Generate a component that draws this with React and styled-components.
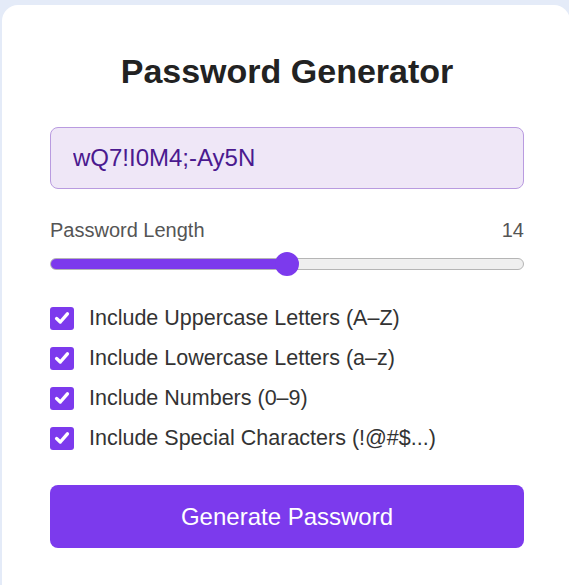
import React, { useState } from "react";
import styled, { createGlobalStyle } from "styled-components";

const GlobalStyle = createGlobalStyle`
  * { box-sizing: border-box; }
  body {
    margin: 0;
    background: #e4ebf8;
    font-family: "Liberation Sans", Arial, sans-serif;
    overflow: hidden;
  }
`;

const Page = styled.div`
  height: 585px;
  padding: 5px 0 0 2px;
`;

const Card = styled.div`
  width: 568px;
  min-height: 600px;
  background: #ffffff;
  border-radius: 16px;
  padding: 46px 46px 0 48px;
  display: flex;
  flex-direction: column;
`;

const Title = styled.h1`
  margin: 0 0 36px;
  font-size: 34px;
  line-height: 40px;
  font-weight: 700;
  color: #222222;
  text-align: center;
`;

const Output = styled.input`
  width: 100%;
  height: 62px;
  padding: 0 22px;
  border: 1px solid #b99be0;
  border-radius: 8px;
  background: #efe7f7;
  color: #4b1a8f;
  font-family: inherit;
  font-size: 24px;
  outline: none;
`;

const LengthRow = styled.div`
  margin-top: 29px;
  display: flex;
  justify-content: space-between;
  font-size: 20px;
  line-height: 24px;
  color: #555555;
`;

const Range = styled.input`
  -webkit-appearance: none;
  appearance: none;
  display: block;
  width: 100%;
  height: 24px;
  margin: 10px 0 0;
  background: transparent;

  &::-webkit-slider-runnable-track {
    height: 12px;
    border-radius: 6px;
    border: 1px solid #b5b5b5;
    background: linear-gradient(
      to right,
      #7c3aed 0,
      #7c3aed ${(p) => p.$fill}%,
      #efefef ${(p) => p.$fill}%,
      #efefef 100%
    );
  }

  &::-webkit-slider-thumb {
    -webkit-appearance: none;
    width: 24px;
    height: 24px;
    margin-top: -7px;
    border-radius: 50%;
    background: #7c3aed;
    border: none;
  }
`;

const Options = styled.div`
  margin-top: 30px;
  display: flex;
  flex-direction: column;
  gap: 16px;
`;

const Option = styled.label`
  display: flex;
  align-items: center;
  gap: 15px;
  height: 24px;
  font-size: 21.5px;
  color: #333333;
  cursor: pointer;
`;

const Box = styled.span`
  width: 24px;
  height: 23px;
  border-radius: 3px;
  background: ${(p) => (p.$on ? "#7c3aed" : "#ffffff")};
  border: ${(p) => (p.$on ? "none" : "1px solid #767676")};
  display: flex;
  align-items: center;
  justify-content: center;
  flex-shrink: 0;
`;

const Button = styled.button`
  margin-top: 35px;
  width: 100%;
  height: 63px;
  border: none;
  border-radius: 8px;
  background: #7c3aed;
  color: #ffffff;
  font-family: inherit;
  font-size: 24px;
  cursor: pointer;
`;

const Check = () => (
  <svg width="16" height="16" viewBox="0 0 16 16">
    <path
      d="M2.6 8.6 L6.3 12 L13.4 3.8"
      fill="none"
      stroke="#ffffff"
      strokeWidth="3.4"
      strokeLinecap="round"
      strokeLinejoin="round"
    />
  </svg>
);

const options = [
  "Include Uppercase Letters (A–Z)",
  "Include Lowercase Letters (a–z)",
  "Include Numbers (0–9)",
  "Include Special Characters (!@#$...)",
];

export default function App() {
  const [length, setLength] = useState(14);
  const [checked, setChecked] = useState([true, true, true, true]);
  const min = 4;
  const max = 24;
  const fill = ((length - min) / (max - min)) * 100;

  return (
    <>
      <GlobalStyle />
      <Page>
        <Card>
          <Title>Password Generator</Title>
          <Output readOnly value="wQ7!I0M4;-Ay5N" />
          <LengthRow>
            <span>Password Length</span>
            <span>{length}</span>
          </LengthRow>
          <Range
            type="range"
            min={min}
            max={max}
            value={length}
            $fill={fill}
            onChange={(e) => setLength(Number(e.target.value))}
          />
          <Options>
            {options.map((text, i) => (
              <Option
                key={text}
                onClick={() =>
                  setChecked(checked.map((c, j) => (j === i ? !c : c)))
                }
              >
                <Box $on={checked[i]}>{checked[i] && <Check />}</Box>
                {text}
              </Option>
            ))}
          </Options>
          <Button>Generate Password</Button>
        </Card>
      </Page>
    </>
  );
}
